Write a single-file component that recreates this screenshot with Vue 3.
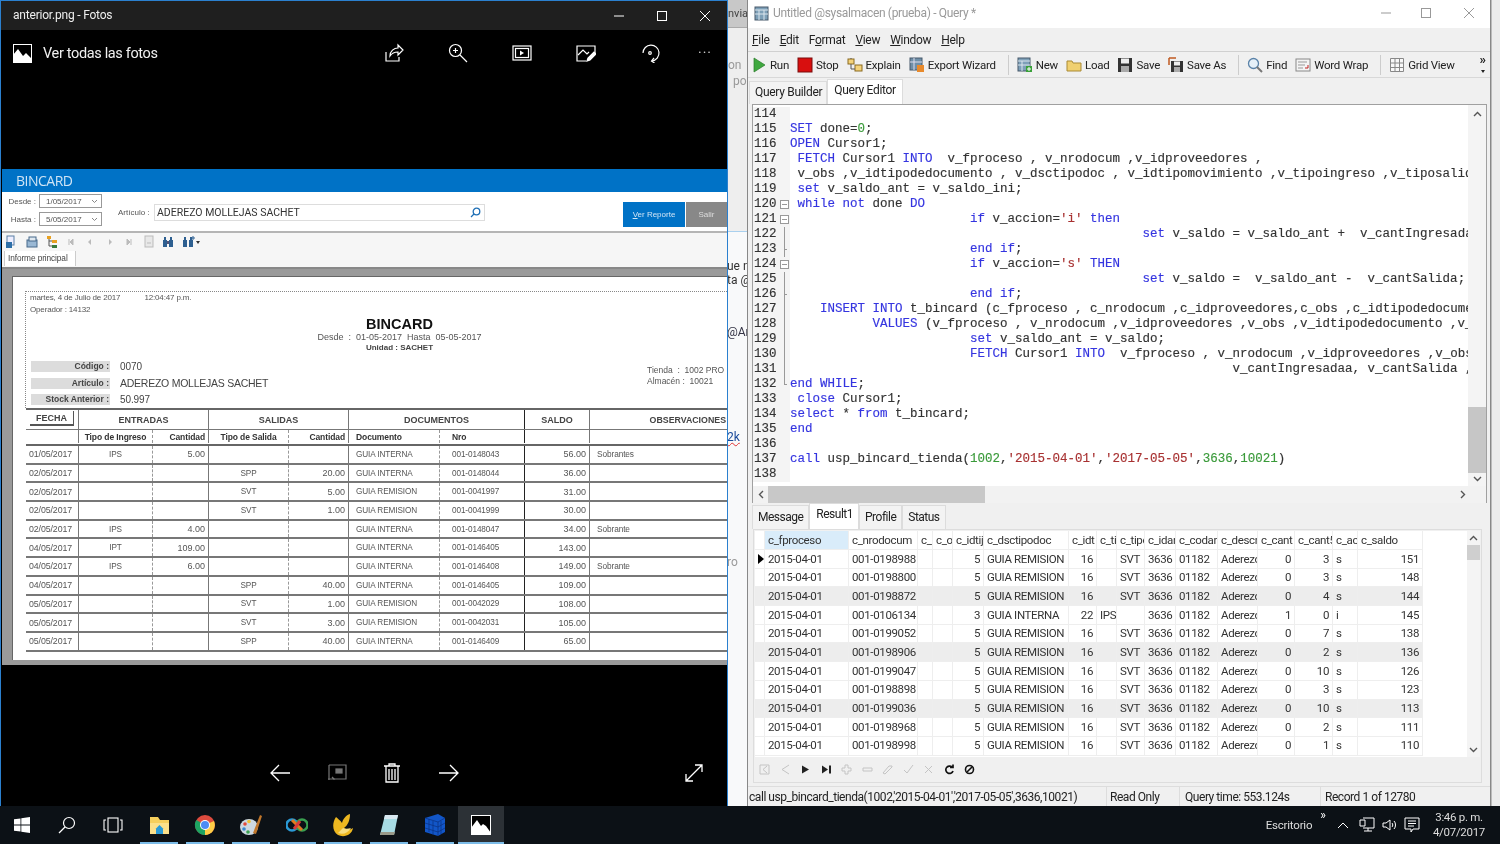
<script setup>
const keyword = 'SET|OPEN|FETCH|INTO|set|while|not|DO|if|then|end|THEN|INSERT|VALUES|WHILE|close|select|from|call'
const tokenRe = new RegExp("('[^']*')|\\b(\\d+)\\b|\\b(" + keyword + ")\\b", 'g')
const sp = n => ' '.repeat(n)
const src = [
  '',
  'SET done=0;',
  'OPEN Cursor1;',
  ' FETCH Cursor1 INTO  v_fproceso , v_nrodocum ,v_idproveedores ,',
  ' v_obs ,v_idtipodedocumento , v_dsctipodoc , v_idtipomovimiento ,v_tipoingreso ,v_tiposalida ,v_idalmacen',
  ' set v_saldo_ant = v_saldo_ini;',
  ' while not done DO',
  sp(24) + "if v_accion='i' then",
  sp(47) + 'set v_saldo = v_saldo_ant +  v_cantIngresadaa;',
  sp(24) + 'end if;',
  sp(24) + "if v_accion='s' THEN",
  sp(47) + 'set v_saldo =  v_saldo_ant -  v_cantSalida;',
  sp(24) + 'end if;',
  sp(4) + 'INSERT INTO t_bincard (c_fproceso , c_nrodocum ,c_idproveedores,c_obs ,c_idtipodedocumento ,c_dsctipodoc',
  sp(11) + 'VALUES (v_fproceso , v_nrodocum ,v_idproveedores ,v_obs ,v_idtipodedocumento ,v_dsctipodoc ,v_idtipo',
  sp(24) + 'set v_saldo_ant = v_saldo;',
  sp(24) + 'FETCH Cursor1 INTO  v_fproceso , v_nrodocum ,v_idproveedores ,v_obs ,v_idtipodedocumento ,',
  sp(59) + 'v_cantIngresadaa, v_cantSalida , v_accion',
  'end WHILE;',
  ' close Cursor1;',
  'select * from t_bincard;',
  'end',
  '',
  "call usp_bincard_tienda(1002,'2015-04-01','2017-05-05',3636,10021)",
  ''
]
const fold = { 120: 'box', 121: 'box', 124: 'box', 123: 'tick', 126: 'tick', 132: 'end' }
const codeLines = src.map((text, i) => {
  const parts = []
  let last = 0
  for (const m of text.matchAll(tokenRe)) {
    if (m.index > last) parts.push({ t: text.slice(last, m.index), c: '' })
    parts.push({ t: m[0], c: m[1] ? 'str' : m[2] ? 'num' : 'kw' })
    last = m.index + m[0].length
  }
  if (last < text.length) parts.push({ t: text.slice(last), c: '' })
  const n = 114 + i
  return { n, parts, fold: fold[n] || (n > 120 && n < 132 ? 'line' : '') }
})

const reportRows = [
  ['01/05/2017','IPS','5.00','','','GUIA INTERNA','001-0148043','56.00','Sobrantes'],
  ['02/05/2017','','','SPP','20.00','GUIA INTERNA','001-0148044','36.00',''],
  ['02/05/2017','','','SVT','5.00','GUIA REMISION','001-0041997','31.00',''],
  ['02/05/2017','','','SVT','1.00','GUIA REMISION','001-0041999','30.00',''],
  ['02/05/2017','IPS','4.00','','','GUIA INTERNA','001-0148047','34.00','Sobrante'],
  ['04/05/2017','IPT','109.00','','','GUIA INTERNA','001-0146405','143.00',''],
  ['04/05/2017','IPS','6.00','','','GUIA INTERNA','001-0146408','149.00','Sobrante'],
  ['04/05/2017','','','SPP','40.00','GUIA INTERNA','001-0146405','109.00',''],
  ['05/05/2017','','','SVT','1.00','GUIA REMISION','001-0042029','108.00',''],
  ['05/05/2017','','','SVT','3.00','GUIA REMISION','001-0042031','105.00',''],
  ['05/05/2017','','','SPP','40.00','GUIA INTERNA','001-0146409','65.00','']
]
const reportAlign = ['', 'c', 'r', 'c', 'r', 'p', 'q', 'r', 'p']

const resHead = ['', 'c_fproceso','c_nrodocum','c_','c_o','c_idtij','c_dsctipodoc','c_idt','c_ti','c_tipo','c_idar','c_codar','c_descr','c_cant','c_cant5','c_ac','c_saldo']
const resAlign = ['', '', '', '', '', 'r', '', 'r', '', '', '', '', '', 'r', 'r', '', 'r']
const rm = (nro, cant, saldo) => ['', '2015-04-01', nro, '', '', '5', 'GUIA REMISION', '16', '', 'SVT', '3636', '01182', 'Aderezo', '0', cant, 's', saldo]
const resRows = [
  rm('001-0198988','3','151'), rm('001-0198800','3','148'), rm('001-0198872','4','144'),
  ['', '2015-04-01','001-0106134','','','3','GUIA INTERNA','22','IPS','','3636','01182','Aderezo','1','0','i','145'],
  rm('001-0199052','7','138'), rm('001-0198906','2','136'), rm('001-0199047','10','126'),
  rm('001-0198898','3','123'), rm('001-0199036','10','113'), rm('001-0198968','2','111'), rm('001-0198998','1','110')
]

const ic = {
  run: '<path d="M3 1v14l11-7z" fill="#3fa83f" stroke="#2a7a2a" stroke-width=".7"/>',
  stop: '<rect x="1" y="1" width="14" height="14" fill="#d80f0f" stroke="#7a0c0c"/>',
  explain: '<rect x="1" y="2" width="6" height="5" fill="#f4d27a" stroke="#8a6a20"/><rect x="8" y="8" width="7" height="6" fill="#f4d27a" stroke="#8a6a20"/><path d="M4 7v5h4M4 1v1" stroke="#555" fill="none"/>',
  export: '<rect x="1" y="1" width="12" height="12" fill="#6f8fa8" stroke="#46586a"/><path d="M1 5h12M5 1v12" stroke="#dde"/><rect x="8" y="8" width="7" height="7" fill="#e88a2c"/>',
  new: '<rect x="1" y="1" width="12" height="13" fill="#7ea0b8" stroke="#46586a"/><path d="M1 4h12M1 8h12M5 4v10" stroke="#dbe6ee"/><rect x="9" y="9" width="6" height="6" fill="#3aa03a"/><path d="M12 10v4M10 12h4" stroke="#fff"/>',
  load: '<path d="M1 4h5l1 2h8v8H1z" fill="#f0d070" stroke="#a98a35"/>',
  save: '<path d="M1 1h14v14H1z" fill="#333"/><rect x="4" y="1.500" width="8" height="5" fill="#eee"/><rect x="4" y="9" width="8" height="6" fill="#aaa"/>',
  saveas: '<path d="M3 4h12v11H3z" fill="#333"/><rect x="6" y="4.500" width="6" height="4" fill="#eee"/><rect x="6" y="10" width="6" height="5" fill="#aaa"/><path d="M1 1h7M1 1v7" stroke="#c05a20" stroke-width="1.500" fill="none"/>',
  find: '<circle cx="6.500" cy="6.500" r="5" fill="#e6f0f8" stroke="#5a82a8" stroke-width="1.300"/><path d="M10 10l5 5" stroke="#777" stroke-width="2"/>',
  wrap: '<rect x="1" y="2" width="14" height="12" fill="#f4f4f4" stroke="#888"/><path d="M3 5h9M3 8h7M3 11h5" stroke="#999"/><path d="M10 11h3V8" stroke="#c02020" fill="none"/>',
  grid: '<path d="M1.500 1.500h13v13h-13zM1.500 6h13M1.500 10.500h13M6 1.500v13M10.500 1.500v13" stroke="#888" fill="#f8f8f8"/>'
}
const tools = [
  [['run','Run'],['stop','Stop'],['explain','Explain'],['export','Export Wizard']],
  [['new','New'],['load','Load'],['save','Save'],['saveas','Save As']],
  [['find','Find'],['wrap','Word Wrap']],
  [['grid','Grid View']]
]

const rpt = [
  '<rect x="2" y="1" width="7" height="9" fill="#eef" stroke="#5a7fa5"/><rect x="1" y="7" width="6" height="6" fill="#2d6fa8"/>',
  '<rect x="2" y="5" width="10" height="7" fill="#9ab8d4" stroke="#46688a"/><rect x="4" y="2" width="7" height="4" fill="#dfe8f0" stroke="#46688a"/>',
  '<rect x="3" y="1" width="4" height="3" fill="#e8a020"/><rect x="8" y="5" width="5" height="3" fill="#e8a020"/><rect x="8" y="10" width="5" height="3" fill="#3a7a3a"/><path d="M5 4v7h3M5 6h3" stroke="#555" fill="none"/>',
  '<path d="M5 4v6M9 4L6 7l3 3z" fill="#bbb" stroke="#bbb"/>',
  '<path d="M8 4L5 7l3 3z" fill="#bbb"/>',
  '<path d="M6 4l3 3-3 3z" fill="#bbb"/>',
  '<path d="M9 4v6M5 4l3 3-3 3z" fill="#bbb" stroke="#bbb"/>',
  '<rect x="3" y="1" width="8" height="11" fill="#e8e8e8" stroke="#bbb"/><path d="M5 8h4" stroke="#bbb"/>',
  '<path d="M2 5h4v7H2zM8 5h4v7H8zM3 2h2v4H3zM9 2h2v4H9z" fill="#2d5f90"/><rect x="6" y="6" width="2" height="3" fill="#557"/>',
  '<path d="M2 5h4v7H2zM8 5h4v7H8zM3 2h2v4H3zM9 2h2v4H9z" fill="#2d5f90"/><path d="M12 1v4M10 3h4" stroke="#2d5f90"/>'
]
</script>

<template>
  <div class="desktop">
    <!-- window behind, only a sliver shows -->
    <div class="behind">
      <div class="bh-top">nvia</div>
      <div class="bh-gray"><span class="bh-a">on</span><span class="bh-b">po</span></div>
      <div class="bh-white">
        <span class="bh-c">ue n</span>
        <span class="bh-d">ta @</span>
        <span class="bh-e">@An</span>
        <span class="bh-f">2k</span>
        <span class="bh-g">ro</span>
      </div>
    </div>
    <div class="behind-right"></div>

    <!-- Photos -->
    <section class="photos">
      <header class="ph-title">
        <span class="ph-name">anterior.png - Fotos</span>
        <div class="winbtns light">
          <svg width="12" height="12" viewBox="0 0 12 12"><path d="M1 6h10" stroke="#fff"/></svg>
          <svg width="12" height="12" viewBox="0 0 12 12"><rect x="1.500" y="1.500" width="9" height="9" fill="none" stroke="#fff"/></svg>
          <svg width="12" height="12" viewBox="0 0 12 12"><path d="M1 1l10 10M11 1L1 11" stroke="#fff"/></svg>
        </div>
      </header>
      <div class="ph-cmd">
        <svg class="ph-logo" width="19" height="19" viewBox="0 0 19 19"><rect x=".5" y=".5" width="18" height="18" fill="#000" stroke="#fff"/><path d="M0 19V11l5-6 5 7 3-3 6 6v4z" fill="#fff"/></svg>
        <span class="ph-all">Ver todas las fotos</span>
        <div class="ph-tools">
          <svg width="20" height="20" viewBox="0 0 20 20" fill="none" stroke="#fff" stroke-width="1.200"><path d="M2 9v9h13v-4M6 13c0-5 4-8 8-8V2l5 5-5 5V9c-3 0-6 1-8 4z"/></svg>
          <svg width="20" height="20" viewBox="0 0 20 20" fill="none" stroke="#fff" stroke-width="1.200"><circle cx="7.500" cy="7.500" r="6"/><path d="M12 12l7 7M5 7.500h5M7.500 5v5"/></svg>
          <svg width="20" height="20" viewBox="0 0 20 20" fill="none" stroke="#fff" stroke-width="1.200"><rect x="1" y="3" width="18" height="14"/><rect x="3.500" y="5.500" width="13" height="9"/><path d="M8 7.500v5l4-2.500z" fill="#fff" stroke="none"/></svg>
          <svg width="20" height="20" viewBox="0 0 20 20" fill="none" stroke="#fff" stroke-width="1.200"><path d="M10 18H1V3h18v7"/><path d="M2 12l5-5 4 4 2-2"/><path d="M11 18l1-3 6-6 2 2-6 6z" fill="#fff"/></svg>
          <svg width="20" height="20" viewBox="0 0 20 20" fill="none" stroke="#fff" stroke-width="1.200"><path d="M3 10a8 8 0 1 1 9 8"/><path d="M14 15l-2.500 3 3 2"/><circle cx="10" cy="10" r="1.300"/></svg>
          <span class="ph-more">···</span>
        </div>
      </div>

      <div class="ph-image">
        <div class="bc-bar">BINCARD</div>
        <div class="bc-form">
          <div class="bc-dates">
            <div class="bc-date"><label>Desde :</label><span class="bc-sel">1/05/2017<svg width="7" height="5" viewBox="0 0 7 5"><path d="M1 1l2.500 2.500L6 1" fill="none" stroke="#888"/></svg></span></div>
            <div class="bc-date"><label>Hasta :</label><span class="bc-sel">5/05/2017<svg width="7" height="5" viewBox="0 0 7 5"><path d="M1 1l2.500 2.500L6 1" fill="none" stroke="#888"/></svg></span></div>
          </div>
          <span class="bc-art">Artículo :</span>
          <div class="bc-input">ADEREZO MOLLEJAS SACHET
            <svg width="11" height="11" viewBox="0 0 11 11" fill="none" stroke="#1f6fb5" stroke-width="1.300"><circle cx="6.500" cy="4.500" r="3.300"/><path d="M4 7l-3 3"/></svg>
          </div>
          <div class="bc-ver"><u>V</u>er Reporte</div>
          <div class="bc-salir">Salir</div>
        </div>
        <div class="bc-tools">
          <svg v-for="(p, i) in rpt" :key="i" width="14" height="14" viewBox="0 0 14 14" v-html="p"></svg>
          <span class="bc-caret"></span>
        </div>
        <div class="bc-tabs"><span class="bc-tab">Informe principal</span></div>
        <div class="bc-canvas">
          <div class="bc-page">
            <div class="rp-box">
              <div class="rp-meta rp-l1"><span>martes, 4 de Julio de 2017</span><span>12:04:47 p.m.</span></div>
              <div class="rp-meta rp-l2">Operador : 14132</div>
              <div class="rp-title">BINCARD</div>
              <div class="rp-range">Desde&nbsp; :&nbsp; 01-05-2017&nbsp; Hasta&nbsp; 05-05-2017</div>
              <div class="rp-unit">Unidad : SACHET</div>
              <div class="rp-info">
                <div class="rp-left">
                  <div class="rp-row"><b>Código :</b><span class="v1">0070</span></div>
                  <div class="rp-row"><b>Artículo :</b><span class="v2">ADEREZO MOLLEJAS SACHET</span></div>
                  <div class="rp-row"><b>Stock Anterior :</b><span class="v1">50.997</span></div>
                </div>
                <div class="rp-right">
                  <div>Tienda&nbsp; :&nbsp; 1002 PRO</div>
                  <div>Almacén :&nbsp; 10021</div>
                </div>
              </div>
            </div>
            <div class="rt">
              <div class="rt-row rt-h1">
                <span class="fecha"><i>FECHA</i></span>
                <span class="span2">ENTRADAS</span>
                <span class="span2">SALIDAS</span>
                <span class="span2">DOCUMENTOS</span>
                <span>SALDO</span>
                <span class="obs">OBSERVACIONES</span>
              </div>
              <div class="rt-row rt-h2">
                <span></span><span class="c">Tipo de Ingreso</span><span class="r">Cantidad</span>
                <span class="c">Tipo de Salida</span><span class="r">Cantidad</span>
                <span class="p">Documento</span><span class="q">Nro</span><span></span><span></span>
              </div>
              <div v-for="(row, i) in reportRows" :key="i" class="rt-row rt-d">
                <span v-for="(v, j) in row" :key="j" :class="reportAlign[j]">{{ v }}</span>
              </div>
            </div>
          </div>
        </div>
      </div>

      <div class="ph-bottom">
        <svg class="b1" width="20" height="18" viewBox="0 0 20 18" fill="none" stroke="#fff" stroke-width="1.300"><path d="M20 9H1M9 1L1 9l8 8"/></svg>
        <svg class="b2" width="20" height="18" viewBox="0 0 20 18" fill="none" stroke="#777" stroke-width="1.200"><path d="M2 1h17v14H6M2 1v15"/><rect x="9" y="5" width="6" height="4" fill="#777"/><path d="M1 15h6l-2-2"/></svg>
        <svg class="b3" width="18" height="20" viewBox="0 0 18 20" fill="none" stroke="#fff" stroke-width="1.300"><path d="M1 3h16M3 3v16h12V3M6 3V1h6v2M6 6v11M9 6v11M12 6v11"/></svg>
        <svg class="b4" width="20" height="18" viewBox="0 0 20 18" fill="none" stroke="#fff" stroke-width="1.300"><path d="M0 9h19M11 1l8 8-8 8"/></svg>
        <svg class="b5" width="18" height="18" viewBox="0 0 18 18" fill="none" stroke="#fff" stroke-width="1.300"><path d="M1 17L17 1M10 1h7v7M1 10v7h7"/></svg>
      </div>
    </section>

    <!-- Query window -->
    <section class="query">
      <header class="q-title">
        <svg width="16" height="16" viewBox="0 0 16 16"><rect x="1" y="2" width="13" height="13" fill="#7ea0b8" stroke="#46586a"/><path d="M1 5h13M1 9h13M5 5v10M10 5v10" stroke="#dbe6ee"/></svg>
        <span class="q-name">Untitled @sysalmacen (prueba) - Query *</span>
        <div class="winbtns dark">
          <svg width="12" height="12" viewBox="0 0 12 12"><path d="M1 6h10" stroke="#999"/></svg>
          <svg width="12" height="12" viewBox="0 0 12 12"><rect x="1.500" y="1.500" width="9" height="9" fill="none" stroke="#999"/></svg>
          <svg class="wx" width="12" height="12" viewBox="0 0 12 12"><path d="M1 1l10 10M11 1L1 11" stroke="#999"/></svg>
        </div>
      </header>
      <nav class="q-menu">
        <span><u>F</u>ile</span><span><u>E</u>dit</span><span>F<u>o</u>rmat</span><span><u>V</u>iew</span><span><u>W</u>indow</span><span><u>H</u>elp</span>
      </nav>
      <div class="q-tools">
        <template v-for="(grp, g) in tools" :key="g">
          <span v-if="g" class="q-sep"></span>
          <div class="q-grp">
            <div v-for="t in grp" :key="t[1]" class="q-tool">
              <svg width="16" height="16" viewBox="0 0 16 16" v-html="ic[t[0]]"></svg>
              <span>{{ t[1] }}</span>
            </div>
          </div>
        </template>
        <div class="q-over"><span>»</span><i></i></div>
      </div>
      <div class="q-tabs">
        <span class="q-tab">Query Builder</span><span class="q-tab on">Query Editor</span>
      </div>
      <div class="editor">
        <div class="ed-main">
          <div class="ed-code">
            <div v-for="l in codeLines" :key="l.n" class="ln">
              <span class="gut">{{ l.n }}</span><span class="fold" :class="l.fold"></span><span class="txt"><span v-for="(p, i) in l.parts" :key="i" :class="p.c">{{ p.t }}</span></span>
            </div>
          </div>
          <div class="vs">
            <svg width="9" height="6" viewBox="0 0 9 6"><path d="M1 5l3.500-3.500L8 5" fill="none" stroke="#555" stroke-width="1.400"/></svg>
            <div class="vs-track"><div class="vs-thumb"></div></div>
            <svg width="9" height="6" viewBox="0 0 9 6"><path d="M1 1l3.500 3.500L8 1" fill="none" stroke="#555" stroke-width="1.400"/></svg>
          </div>
        </div>
        <div class="hs">
          <svg width="6" height="9" viewBox="0 0 6 9"><path d="M5 1L1.500 4.500 5 8" fill="none" stroke="#555" stroke-width="1.400"/></svg>
          <div class="hs-track"><div class="hs-thumb"></div></div>
          <svg width="6" height="9" viewBox="0 0 6 9"><path d="M1 1l3.500 3.500L1 8" fill="none" stroke="#555" stroke-width="1.400"/></svg>
        </div>
      </div>
      <div class="r-tabs">
        <span class="r-tab">Message</span><span class="r-tab on">Result1</span><span class="r-tab">Profile</span><span class="r-tab">Status</span>
      </div>
      <div class="r-panel">
        <div class="r-body">
          <div class="r-grid">
            <div class="r-row r-head">
              <span v-for="(h, i) in resHead" :key="i" :class="{ sel: i === 1 }">{{ h }}</span>
            </div>
            <div v-for="(row, i) in resRows" :key="i" class="r-row" :class="{ alt: i % 3 === 2 }">
              <span v-for="(v, j) in row" :key="j" :class="resAlign[j]"><svg v-if="i === 0 && j === 0" width="6" height="10" viewBox="0 0 6 10"><path d="M0 0l6 5-6 5z" fill="#000"/></svg>{{ v }}</span>
            </div>
          </div>
          <div class="r-vs">
            <svg width="9" height="6" viewBox="0 0 9 6"><path d="M1 5l3.500-3.500L8 5" fill="none" stroke="#555" stroke-width="1.400"/></svg>
            <div class="r-track"><div class="r-thumb"></div></div>
            <svg width="9" height="6" viewBox="0 0 9 6"><path d="M1 1l3.500 3.500L8 1" fill="none" stroke="#555" stroke-width="1.400"/></svg>
          </div>
        </div>
        <div class="r-nav">
          <svg width="11" height="11" viewBox="0 0 11 11" fill="none" stroke="#c4c4c4"><path d="M1 1v9h9V1zM8 2L4 5.500 8 9"/></svg>
          <svg width="11" height="11" viewBox="0 0 11 11" fill="none" stroke="#c4c4c4"><path d="M9 1L2 5.500 9 10"/></svg>
          <svg width="11" height="11" viewBox="0 0 11 11"><path d="M2 1.500l7 4-7 4z" fill="#222"/></svg>
          <svg width="11" height="11" viewBox="0 0 11 11"><path d="M1 1.500l6 4-6 4zM8 1.500h2v8H8z" fill="#222"/></svg>
          <svg width="11" height="11" viewBox="0 0 11 11" fill="none" stroke="#c4c4c4"><path d="M4 1h3v3h3v3H7v3H4V7H1V4h3z"/></svg>
          <svg width="11" height="11" viewBox="0 0 11 11" fill="none" stroke="#c4c4c4"><path d="M1 4h9v3H1z"/></svg>
          <svg width="11" height="11" viewBox="0 0 11 11" fill="none" stroke="#c4c4c4"><path d="M1 9L7 2h3v1L3 10z"/></svg>
          <svg width="11" height="11" viewBox="0 0 11 11" fill="none" stroke="#c4c4c4"><path d="M1 6l3 3 6-8"/></svg>
          <svg width="11" height="11" viewBox="0 0 11 11" fill="none" stroke="#c4c4c4"><path d="M2 2l7 7M9 2L2 9"/></svg>
          <svg width="11" height="11" viewBox="0 0 11 11" fill="none" stroke="#111" stroke-width="1.700"><path d="M9 7a3.700 3.700 0 1 1-1-4M9 .5v3H6"/></svg>
          <svg width="11" height="11" viewBox="0 0 11 11" fill="none" stroke="#111" stroke-width="1.600"><circle cx="5.500" cy="5.500" r="4"/><path d="M3 8l5-5"/></svg>
        </div>
      </div>
      <footer class="q-status">
        <span class="st1">call usp_bincard_tienda(1002,'2015-04-01','2017-05-05',3636,10021)</span>
        <span class="st2">Read Only</span>
        <span class="st3">Query time: 553.124s</span>
        <span class="st4">Record 1 of 12780</span>
      </footer>
    </section>

    <!-- Taskbar -->
    <footer class="taskbar">
      <div class="tk-start">
        <svg width="16" height="16" viewBox="0 0 16 16"><path d="M0 2.300l6.500-.9v6.200H0zM7.300 1.300L16 0v7.600H7.300zM0 8.400h6.500v6.200L0 13.700zM7.300 8.400H16V16l-8.700-1.200z" fill="#fff"/></svg>
      </div>
      <div class="tk-btn"><svg width="18" height="18" viewBox="0 0 18 18" fill="none" stroke="#fff" stroke-width="1.200"><circle cx="11" cy="7" r="5.500"/><path d="M7 11l-6 6"/></svg></div>
      <div class="tk-btn"><svg width="20" height="16" viewBox="0 0 20 16" fill="none" stroke="#fff" stroke-width="1.100"><rect x="5" y="1" width="10" height="14"/><path d="M3 3H1v10h2M17 3h2v10h-2"/></svg></div>
      <div class="tk-btn u">
        <svg width="21" height="21" viewBox="0 0 21 21"><path d="M1 2h8l2 3h9v14H1z" fill="#f6cf5c"/><path d="M1 8h19v11H1z" fill="#fbe08a"/><path d="M7 14h7v5H7z" fill="#2a9ad6"/><path d="M10.500 10l4 4h-8z" fill="#2a9ad6"/></svg>
      </div>
      <div class="tk-btn u">
        <svg width="22" height="22" viewBox="0 0 22 22"><circle cx="11" cy="11" r="10" fill="#dd4b3e"/><path d="M11 11L2.300 6A10 10 0 0 0 11 21z" fill="#1da462"/><path d="M11 11v10a10 10 0 0 0 9-14z" fill="#ffcd46"/><circle cx="11" cy="11" r="5" fill="#fff"/><circle cx="11" cy="11" r="4" fill="#4c8bf5"/></svg>
      </div>
      <div class="tk-btn u">
        <svg width="24" height="24" viewBox="0 0 24 24"><ellipse cx="10" cy="14" rx="9" ry="8" fill="#cdd8e0"/><circle cx="6" cy="11" r="1.800" fill="#e24a3a"/><circle cx="10" cy="8.500" r="1.800" fill="#f0c030"/><circle cx="5" cy="16" r="1.800" fill="#3a8ad0"/><circle cx="9" cy="19" r="1.800" fill="#3aa050"/><path d="M14 20L21 2l2 1-6 18z" fill="#c0762a"/></svg>
      </div>
      <div class="tk-btn u">
        <svg width="22" height="16" viewBox="0 0 22 16"><circle cx="6" cy="8" r="5.500" fill="none" stroke="#2a9ad6" stroke-width="2.500"/><circle cx="16" cy="8" r="5.500" fill="none" stroke="#3aa050" stroke-width="2.500"/><path d="M6 3l10 10" stroke="#e07a20" stroke-width="3"/><path d="M8 12l6-8" stroke="#d83a3a" stroke-width="3"/></svg>
      </div>
      <div class="tk-btn u">
        <svg width="22" height="24" viewBox="0 0 22 24"><path d="M4 4c-4 6-4 14 2 18 6 3 14 0 15-7-3 2-6 2-9 0 4-3 6-8 6-14-4 1-7 5-8 9C8 7 6 6 4 4z" fill="#eeb820"/><path d="M6 20c5 2 10 0 13-5-3 1-6 1-8 0z" fill="#f8de80"/></svg>
      </div>
      <div class="tk-btn u">
        <svg width="20" height="22" viewBox="0 0 20 22"><path d="M6 1h13L15 21H1z" fill="#a8dce4"/><path d="M6 1h13l-1 4H5z" fill="#d8e8f0"/><path d="M1 21h14l1-3H2z" fill="#9a9a8a"/></svg>
      </div>
      <div class="tk-btn u">
        <svg width="22" height="24" viewBox="0 0 22 24"><path d="M1 5l13-4 7 4v14l-7 4-13-4z" fill="#1256c8"/><path d="M1 5l13 4 7-4M14 9v14M5 6v13M9 8v14M17 8v13M1 10l13 4 7-4M1 15l13 4 7-4" fill="none" stroke="#0a2f80" stroke-width=".7"/></svg>
      </div>
      <div class="tk-btn u act">
        <svg width="20" height="20" viewBox="0 0 20 20"><rect x=".5" y=".5" width="19" height="19" fill="#000" stroke="#fff"/><path d="M0 20v-7l6-8 4 6 2-2 3 2 5 7v2z" fill="#fff"/></svg>
      </div>

      <div class="tray">
        <span class="tr-desk">Escritorio</span>
        <span class="tr-more">»</span>
        <svg width="12" height="8" viewBox="0 0 12 8"><path d="M1 7l5-5 5 5" fill="none" stroke="#fff"/></svg>
        <svg class="tr-net" width="16" height="16" viewBox="0 0 16 16" fill="none" stroke="#fff"><path d="M4 1h11v10H4M1 3h5v6H1zM9 11v3M5 14h8"/></svg>
        <svg width="15" height="14" viewBox="0 0 15 14" fill="none" stroke="#fff"><path d="M1 5h3l4-3v10L4 9H1zM10 5c1 1 1 3 0 4M12 3c2 2 2 6 0 8"/></svg>
        <svg width="16" height="16" viewBox="0 0 16 16" fill="none" stroke="#fff"><path d="M1 1h14v11H9l-2 3v-3H1zM4 4h8M4 6.500h8M4 9h6"/></svg>
        <div class="tr-clock"><span>3:46 p. m.</span><span>4/07/2017</span></div>
      </div>
    </footer>
  </div>
</template>

<style>
html, body { margin: 0; background: #000; }
</style>

<style scoped>
.desktop { position: relative; width: 1500px; height: 844px; overflow: hidden; background: #e6e6e6; font-family: Roboto, "Open Sans", sans-serif; filter: blur(.35px); }
svg { display: block; flex: none; }

/* sliver of the window behind */
.behind { position: absolute; left: 727px; top: 0; width: 21px; height: 806px; display: flex; flex-direction: column; font-size: 12px; color: #555; overflow: hidden; white-space: nowrap; background: #f3f3f3; }
.bh-top { height: 27px; line-height: 27px; background: #c8c8c8; color: #444; font-size: 11px; padding-left: 1px; border-bottom: 1px solid #aaa; flex: none; }
.bh-gray { height: 203px; background: #eeeeee; display: flex; flex-direction: column; color: #999; flex: none; }
.bh-a { margin-top: 30px; padding-left: 1px; }
.bh-b { margin-top: 2px; padding-left: 6px; }
.bh-white { flex: 1; background: #f8f9fa; border-top: 1px solid #a9d0ee; display: flex; flex-direction: column; color: #333; }
.bh-c { margin-top: 27px; }
.bh-d { margin-top: 0; }
.bh-e { margin-top: 38px; color: #334; }
.bh-f { margin-top: 91px; color: #1a4a9a; text-decoration: underline wavy #d33 1px; }
.bh-g { margin-top: 111px; color: #999; }
.behind-right { position: absolute; left: 1491px; top: 0; width: 9px; height: 806px; background: #ececec; border-left: 1px solid #bbb; }

/* Photos */
.photos { position: absolute; left: 0; top: 0; width: 728px; height: 807px; box-sizing: border-box; background: #000; border: 1px solid #2b80cf; border-bottom-color: #1a5c94; color: #fff; display: flex; flex-direction: column; }
.ph-title { height: 29px; flex: none; background: #1f1f1f; display: flex; align-items: center; padding: 0 0 2px 12px; box-sizing: border-box; font-size: 12px; letter-spacing: -.2px; }
.ph-name { flex: 1; color: #eee; }
.winbtns { display: flex; align-items: center; }
.winbtns.light { gap: 31px; padding-right: 16px; padding-top: 2px; }
.winbtns.dark { gap: 28px; padding-right: 15px; margin-left: auto; }
.wx { margin-left: 3px; }
.ph-cmd { height: 47px; flex: none; display: flex; align-items: center; padding: 0 0 1px 12px; box-sizing: border-box; }
.ph-all { font-size: 14.500px; margin-left: 11px; color: #f0f0f0; letter-spacing: -.35px; }
.ph-tools { margin-left: auto; display: flex; align-items: center; gap: 44px; padding-right: 5px; }
.ph-more { font-size: 14px; letter-spacing: 1px; width: 24px; color: #ccc; margin-left: -6px; }

.ph-image { margin-top: 92px; height: 496px; flex: none; background: #fff; color: #333; font-family: "Liberation Sans", Arial, sans-serif; margin-left: 1px; overflow: hidden; display: flex; flex-direction: column; }
.bc-bar { height: 23px; flex: none; background: #0072c6; color: #cfe4f5; font-family: "Open Sans", sans-serif; font-size: 14px; line-height: 23px; padding-left: 14px; letter-spacing: -.5px; }
.bc-form { flex: none; display: flex; align-items: flex-start; border-bottom: 2px solid #b5b5b5; font-size: 8px; color: #555; box-sizing: border-box; height: 41px; }
.bc-dates { display: flex; flex-direction: column; gap: 4px; padding-top: 2px; width: 100px; }
.bc-date { display: flex; align-items: center; height: 14px; }
.bc-date label { width: 37px; text-align: right; padding-right: 3px; box-sizing: border-box; }
.bc-sel { width: 63px; height: 14px; box-sizing: border-box; border: 1px solid #999; display: flex; align-items: center; justify-content: space-between; padding: 0 3px 0 6px; color: #555; }
.bc-art { margin-left: 16px; margin-top: 16px; width: 36px; white-space: nowrap; line-height: 10px; }
.bc-input { margin-top: 12px; width: 331px; height: 17px; box-sizing: border-box; border: 1px solid #ddd; font-family: Roboto, sans-serif; font-size: 10.500px; line-height: 15px; padding: 0 3px 0 2px; color: #333; display: flex; align-items: center; justify-content: space-between; }
.bc-ver { margin-left: 138px; margin-top: 10px; width: 62px; height: 25px; background: #0072c6; color: #cfe4f5; font-size: 8px; line-height: 25px; text-align: center; }
.bc-salir { margin-left: 1px; margin-top: 10px; width: 41px; height: 25px; background: #888; color: #ddd; font-size: 8px; line-height: 25px; text-align: center; }
.bc-tools { height: 18px; flex: none; background: #f6f6f6; display: flex; align-items: center; gap: 5.500px; padding-left: 3px; }
.bc-caret { width: 0; height: 0; border: 2px solid transparent; border-top: 3px solid #333; margin: 2px 0 0 -4px; }
.bc-tabs { height: 16px; flex: none; background: #f6f6f6; display: flex; }
.bc-tab { margin-left: 2px; width: 72px; height: 15px; box-sizing: border-box; background: #fff; border-right: 1px solid #ccc; border-left: 1px solid #ccc; font-size: 8.300px; color: #444; line-height: 15px; padding-left: 3px; white-space: nowrap; letter-spacing: -.1px; }
.bc-canvas { flex: 1; background: #9a9a9a; border-top: 2px solid #888; padding: 7px 0 5px 10px; display: flex; min-height: 0; }
.bc-page { flex: 1; background: #fff; padding: 14px 0 0 13px; overflow: hidden; border-top: 1px solid #666; border-left: 1px solid #666; min-width: 0; }
.rp-box { border-top: 1px dotted #888; border-left: 1px dotted #888; padding-left: 4px; margin-left: -1px; }
.rp-meta { font-size: 8px; color: #555; height: 12px; line-height: 12px; letter-spacing: -.15px; }
.rp-l1 { display: flex; gap: 24px; }
.rp-title, .rp-range, .rp-unit { width: 739px; text-align: center; white-space: nowrap; }
.rp-title { font-size: 14.500px; font-weight: 700; color: #111; height: 16px; line-height: 16px; }
.rp-range { font-size: 9px; color: #555; height: 11px; line-height: 11px; }
.rp-unit { font-size: 8px; font-weight: 700; color: #444; height: 10px; line-height: 10px; }
.rp-info { display: flex; margin-top: 8px; height: 47px; }
.rp-left { display: flex; flex-direction: column; gap: 5.500px; margin-left: 1px; }
.rp-row { display: flex; height: 11px; align-items: center; }
.rp-row b { width: 79px; background: #dcdcdc; text-align: right; font-size: 8.500px; color: #444; line-height: 11px; height: 11px; padding-right: 1px; box-sizing: border-box; }
.v1 { font-size: 10px; color: #444; margin-left: 10px; letter-spacing: -.1px; }
.v2 { font-size: 10.500px; color: #444; margin-left: 10px; letter-spacing: -.25px; }
.rp-right { margin-left: auto; font-size: 8.500px; color: #555; line-height: 11px; padding-top: 4px; width: 80px; white-space: nowrap; overflow: hidden; }

.rt { border-top: 2px solid #666; width: 702px; font-size: 8px; color: #444; }
.rt-row { display: grid; grid-template-columns: 53px 74px 56px 80px 60px 91px 85px 65px 138px; }
.rt-row > span { box-sizing: border-box; border-right: 1px solid #777; overflow: hidden; white-space: nowrap; display: flex; align-items: center; justify-content: center; }
.rt-row > span:nth-child(2), .rt-row > span:nth-child(4), .rt-row > span:nth-child(6) { border-right: 1px dashed #999; }
.rt-row > span:nth-child(7) { border-right: 1px solid #222; }
.rt-row > .r { justify-content: flex-end; padding-right: 3px; }
.rt-row > .p { justify-content: flex-start; padding-left: 7px; }
.rt-row > .q { justify-content: flex-start; padding-left: 12px; }
.rt-d > span:first-child { justify-content: flex-start; padding-left: 3px; font-size: 8.800px; }
.rt-h1 { grid-template-columns: 53px 130px 140px 176px 65px 138px; height: 19px; font-weight: 700; font-size: 9px; border-bottom: 1px solid #777; }
.rt-h1 > span { border-right: 1px solid #777 !important; padding-top: 1px; }
.rt-h1 > span:nth-child(4) { border-right: 1px solid #222 !important; }
.fecha { padding: 0 !important; align-items: flex-start !important; justify-content: flex-start !important; }
.fecha i { font-style: normal; margin: 1px 0 0 4px; width: 44px; height: 15px; line-height: 14px; text-align: center; border-right: 1px solid #555; border-bottom: 2px solid #555; box-sizing: border-box; }
.rt-h1 .obs { justify-content: flex-end; padding-right: 2px; border-right: 0 !important; font-size: 8.800px; }
.rt-h2 { height: 16px; font-weight: 700; font-size: 8.500px; border-bottom: 2px solid #666; box-sizing: border-box; letter-spacing: -.1px; color: #333; padding-bottom: 1px; }
.rt-d { height: 18.700px; border-bottom: 2px solid #777; box-sizing: border-box; font-size: 8.200px; color: #555; letter-spacing: -.1px; }
.rt-d > span:nth-child(3), .rt-d > span:nth-child(5), .rt-d > span:nth-child(8) { font-size: 9px; letter-spacing: 0; }
.rt-d > span:nth-child(9) { font-size: 8.300px; }

.ph-bottom { margin-top: auto; height: 60px; flex: none; display: flex; align-items: center; padding-bottom: 6px; box-sizing: border-box; }
.b1 { margin-left: 269px; }
.b2 { margin-left: 37px; }
.b3 { margin-left: 36px; }
.b4 { margin-left: 38px; }
.b5 { margin-left: 226px; }

/* Query */
.query { position: absolute; left: 747px; top: 0; width: 744px; height: 807px; box-sizing: border-box; background: #f0f0f0; border: 1px solid #888; border-top: 0; display: flex; flex-direction: column; color: #222; font-size: 12px; }
.q-title { height: 28px; flex: none; background: #fff; display: flex; align-items: center; padding: 0 0 2px 6px; box-sizing: border-box; }
.q-name { margin-left: 3px; color: #999; font-size: 12px; letter-spacing: -.33px; }
.q-menu { height: 24px; flex: none; display: flex; align-items: center; gap: 10px; padding-left: 4px; color: #222; font-size: 12px; letter-spacing: -.3px; border-bottom: 1px solid #d0d0d0; box-sizing: border-box; }
.q-tools { height: 26px; flex: none; display: flex; align-items: center; padding-left: 3px; border-bottom: 1px solid #d8d8d8; box-sizing: border-box; position: relative; }
.q-grp { display: flex; gap: 8px; align-items: center; }
.q-tool { display: flex; align-items: center; gap: 3px; white-space: nowrap; font-size: 11.500px; letter-spacing: -.25px; }
.q-sep { width: 1px; height: 20px; background: #ccc; margin: 0 8px 0 12px; }
.q-over { position: absolute; right: 4px; top: 2px; font-size: 13px; line-height: 12px; text-align: center; display: flex; flex-direction: column; align-items: center; gap: 4px; font-weight: 700; }
.q-over i { width: 0; height: 0; border: 2.500px solid transparent; border-top: 3px solid #222; }
.q-tabs { height: 26px; flex: none; display: flex; padding-left: 1px; align-items: flex-end; box-sizing: border-box; padding-top: 2px; letter-spacing: -.3px; }
.q-tab { height: 22px; line-height: 20px; padding: 0 4px 0 5px; background: #f3f3f3; border: 1px solid #dcdcdc; border-bottom: 0; white-space: nowrap; color: #222; }
.q-tab.on { height: 25px; line-height: 20px; background: #fff; padding: 0 6px; margin-bottom: -1px; }

.editor { margin: 0 3px 0 4px; height: 399px; flex: none; border: 1px solid #a0a0a0; border-bottom: 0; background: #fff; display: flex; flex-direction: column; box-sizing: border-box; }
.ed-main { flex: none; height: 381px; display: flex; min-height: 0; }
.ed-code { width: 715px; flex: none; overflow: hidden; padding-top: 2px; }
.ln { display: flex; height: 15px; font-family: "Liberation Mono", "Courier New", monospace; font-size: 12.500px; line-height: 15px; white-space: pre; color: #333; -webkit-text-stroke: .15px currentColor; }
.gut { width: 26px; box-sizing: border-box; padding-left: 1px; background: #f4f4f4; flex: none; }
.fold { width: 11px; background: #f4f4f4; flex: none; position: relative; }
.fold.box::before { content: ""; position: absolute; left: 1px; top: 3px; width: 7px; height: 7px; border: 1px solid #999; background: linear-gradient(#999,#999) center/5px 1px no-repeat #fff; }
.fold.line::before, .fold.tick::before, .fold.end::before { content: ""; position: absolute; left: 5px; top: 0; bottom: 0; width: 1px; background: #999; }
.fold.tick::after, .fold.end::after { content: ""; position: absolute; left: 5px; top: 7px; width: 3px; height: 1px; background: #999; }
.fold.end::before { bottom: 7px; }
.txt { flex: 1; overflow: hidden; }
.kw { color: #3535e0; }
.str { color: #a83232; }
.num { color: #3a9a3a; }
.vs { flex: 1; background: #f4f4f4; display: flex; flex-direction: column; align-items: center; padding: 6px 0 4px; box-sizing: border-box; }
.vs-track { flex: 1; width: 100%; display: flex; flex-direction: column; justify-content: flex-end; padding: 4px 0; }
.vs-thumb { height: 66px; background: #c6c6c6; margin-bottom: -1px; }
.hs { flex: 1; background: #f2f2f2; display: flex; align-items: center; padding: 0 20px 0 5px; }
.hs-track { flex: 1; height: 100%; padding-left: 4px; }
.hs-thumb { width: 217px; height: 100%; background: #c8c8c8; }
.r-tabs { height: 25px; flex: none; display: flex; align-items: flex-end; padding-left: 4px; margin-top: 1px; box-sizing: border-box; letter-spacing: -.5px; }
.r-tab { height: 23px; line-height: 23px; padding: 0 5px; background: #f3f3f3; border: 1px solid #dcdcdc; border-bottom: 0; }
.r-tab.on { height: 25px; line-height: 20px; background: #fff; padding: 0 5px 0 6px; }
.r-panel { margin: 0 8px 0 5px; height: 254px; flex: none; background: #f0f0f0; border: 1px solid #ddd; box-sizing: border-box; display: flex; flex-direction: column; padding: 1px 1px 0; }
.r-body { height: 226px; flex: none; display: flex; background: #fff; overflow: hidden; }
.r-grid { width: 712px; flex: none; overflow: hidden; }
.r-row { display: grid; grid-template-columns: 10px 84px 69px 15px 20px 31px 85px 28px 20px 28px 31px 42px 40px 37px 38px 25px 65px; height: 18.700px; font-size: 11.500px; line-height: 18.700px; color: #333; background: #fff; width: 668px; letter-spacing: -.35px; }
.r-row > span { box-sizing: border-box; border-right: 1px solid #eee; border-bottom: 1px solid #eee; padding: 0 2px 0 3px; overflow: hidden; white-space: nowrap; display: flex; align-items: center; }
.r-row > span:first-child { padding: 0 0 0 3px; }
.r-row > .r { justify-content: flex-end; padding-right: 3px; }
.alt { background: #ededed; }
.r-head { background: #fff; height: 19px; }
.r-head > span { padding-left: 3px; padding-right: 0; }
.r-head > .sel { background: #d9ecfa; }
.r-vs { flex: 1; display: flex; flex-direction: column; align-items: center; background: #f4f4f4; padding: 4px 0; }
.r-track { flex: 1; width: 100%; padding-top: 4px; }
.r-thumb { height: 15px; background: #cfcfcf; }
.r-nav { flex: 1; display: flex; align-items: center; gap: 9.500px; padding-left: 4px; }
.q-status { flex: 1; display: flex; align-items: center; font-size: 12px; letter-spacing: -.45px; background: #f0f0f0; border-top: 1px solid #ddd; margin-top: 3px; white-space: nowrap; }
.q-status span { box-sizing: border-box; height: 100%; display: flex; align-items: center; border-right: 1px solid #ddd; }
.st1 { width: 359px; padding-left: 1px; }
.st2 { width: 73px; padding-left: 3px; }
.st3 { width: 141px; padding-left: 5px; }
.st4 { padding-left: 4px; border-right: 0 !important; }

/* Taskbar */
.taskbar { position: absolute; left: 0; right: 0; top: 806px; height: 38px; background: #0c1116; display: flex; align-items: center; color: #ddd; font-size: 12px; }
.tk-start { width: 44px; display: flex; justify-content: center; }
.tk-btn { width: 46px; height: 38px; box-sizing: border-box; display: flex; align-items: center; justify-content: center; position: relative; }
.tk-btn.u::after { content: ""; position: absolute; left: 4px; right: 4px; bottom: 0; height: 2px; background: #7cbce8; }
.tk-btn.act { background: #2c3136; }
.tk-btn.act::after { left: 0; right: 0; }
.tray { margin-left: auto; display: flex; align-items: center; height: 100%; padding-right: 15px; }
.tr-desk { margin-right: 8px; font-size: 11.500px; color: #ddd; letter-spacing: -.2px; }
.tr-more { margin-right: 11px; font-size: 12px; line-height: 12px; align-self: flex-start; margin-top: 3px; color: #fff; }
.tray svg { margin-right: 7px; }
.tray .tr-net { margin-left: 3px; }
.tr-clock { display: flex; flex-direction: column; align-items: center; font-size: 11.500px; line-height: 15px; margin-left: 6px; color: #ddd; letter-spacing: -.3px; }
</style>
